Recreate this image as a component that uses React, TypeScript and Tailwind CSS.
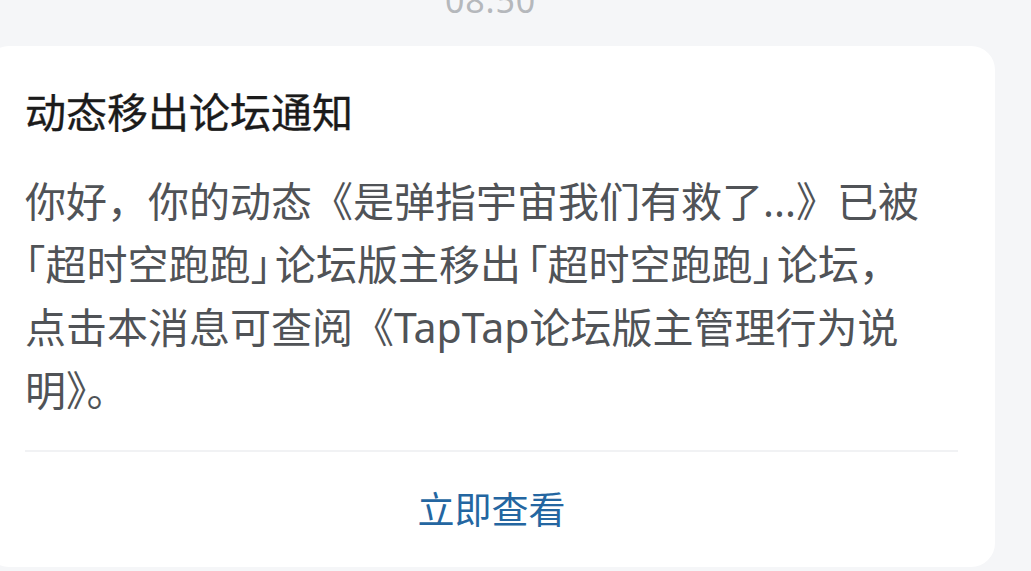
export default function App() {
  const font = { fontFamily: '"Noto Sans", "Noto Sans CJK SC", sans-serif' };
  const half = "[font-feature-settings:'halt']";
  return (
    <div className="w-[1031px] h-[571px] overflow-hidden bg-[#f5f6f8]" style={font}>
      {/* time stamp, mostly cut off at the top */}
      <div className="h-[46px] flex justify-center pr-[50px]">
        <span className="mt-[-20px] text-[34px] leading-[40px] text-[#b5b8bc] tracking-wide">08:50</span>
      </div>

      <div className="ml-[-15px] w-[1010px] h-[521px] bg-white rounded-[24px] pl-[40px] pr-[37px] flex flex-col">
        <h1 className="pt-[41px] text-[41px] leading-[50px] font-normal text-[#1b1b1b] [-webkit-text-stroke:0.35px_#1b1b1b]">
          动态移出论坛通知
        </h1>

        <div className="mt-[33px] text-[41px] leading-[63px] text-[#505357] whitespace-nowrap">
          <p>你好，你的动态《是弹指宇宙我们有救了...》已被</p>
          <p>
            <span className={half}>「</span>超时空跑跑<span className={half}>」</span>
            <span className="ml-[4px]">论坛版主移出</span>
            <span className={`ml-[6px] ${half}`}>「</span>超时空跑跑<span className={half}>」</span>
            <span className="ml-[4px]">论坛，</span>
          </p>
          <p>点击本消息可查阅《TapTap论坛版主管理行为说</p>
          <p>明》。</p>
        </div>

        <div className="mt-[28px] h-[2px] bg-[#f1f2f4]" />

        <button className="flex-1 flex items-center justify-center text-[37px] text-[#2466a1]">
          立即查看
        </button>
      </div>
    </div>
  );
}
